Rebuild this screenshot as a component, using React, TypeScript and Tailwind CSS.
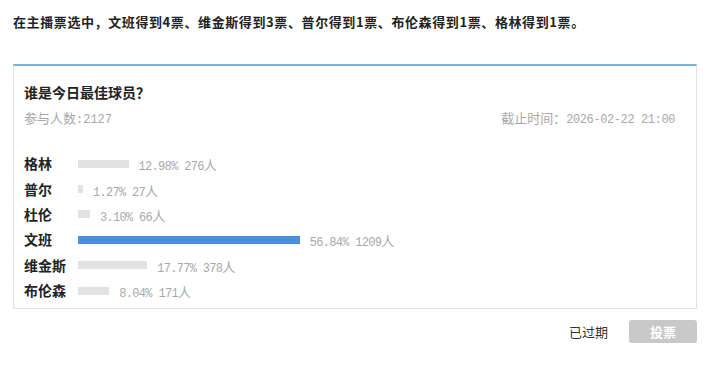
const rows = [
  { name: "格林", pct: "12.98", count: 276, top: false },
  { name: "普尔", pct: "1.27", count: 27, top: false },
  { name: "杜伦", pct: "3.10", count: 66, top: false },
  { name: "文班", pct: "56.84", count: 1209, top: true },
  { name: "维金斯", pct: "17.77", count: 378, top: false },
  { name: "布伦森", pct: "8.04", count: 171, top: false },
];

const cjk = { fontFamily: '"Noto Sans CJK SC", "Liberation Sans", sans-serif' };
const mono = { fontFamily: '"Liberation Mono", "Noto Sans CJK SC", monospace' };

export default function App() {
  return (
    <main className="h-[370px] w-[720px] bg-white text-[#222]" style={cjk}>
      {/* 结果摘要 */}
      <p className="px-[13px] pt-3 text-[13px] font-bold leading-5 tracking-[0.6px]">
        在主播票选中，文班得到4票、维金斯得到3票、普尔得到1票、布伦森得到1票、格林得到1票。
      </p>

      {/* 投票卡片 */}
      <section className="mx-[13px] mt-8 w-[684px] border border-t-2 border-[#e3e3e3] border-t-[#7eaed0] pb-[5px] pl-[10px] pr-[21px] pt-4">
        <h2 className="text-[14px] font-bold leading-5">谁是今日最佳球员？</h2>
        <div className="mt-[7px] flex items-center justify-between text-[13px] leading-[18px] text-[#a8a8a8]">
          <span>
            参与人数<span style={mono} className="text-[12px]">:2127</span>
          </span>
          <span>
            截止时间：<span style={mono} className="text-[12px] tracking-[-0.4px]">2026-02-22 21:00</span>
          </span>
        </div>

        <ul className="mt-[22px]">
          {rows.map((r) => (
            <li key={r.name} className="flex h-[25.4px] items-center">
              <span className="w-[54px] shrink-0 text-[14px] font-bold">{r.name}</span>
              <span
                className={r.top ? "h-2 bg-[#4a90dc]" : "h-2 bg-[#e2e2e2]"}
                style={{ width: `${(parseFloat(r.pct) / 100) * 390}px` }}
              />
              <span className="ml-[10px] text-[#a8a8a8]">
                <span style={mono} className="text-[12px] tracking-[-0.7px]">
                  {r.pct}% {r.count}
                </span>
                <span className="text-[13px]">人</span>
              </span>
            </li>
          ))}
        </ul>
      </section>

      {/* 底部操作 */}
      <div className="mt-[11px] flex w-[697px] items-center justify-end gap-[21px]">
        <span className="text-[13px] text-[#333]">已过期</span>
        <button className="h-[23px] w-[68px] rounded-[3px] bg-[#c8c8c8] text-[13px] font-bold text-white">
          投票
        </button>
      </div>
    </main>
  );
}
